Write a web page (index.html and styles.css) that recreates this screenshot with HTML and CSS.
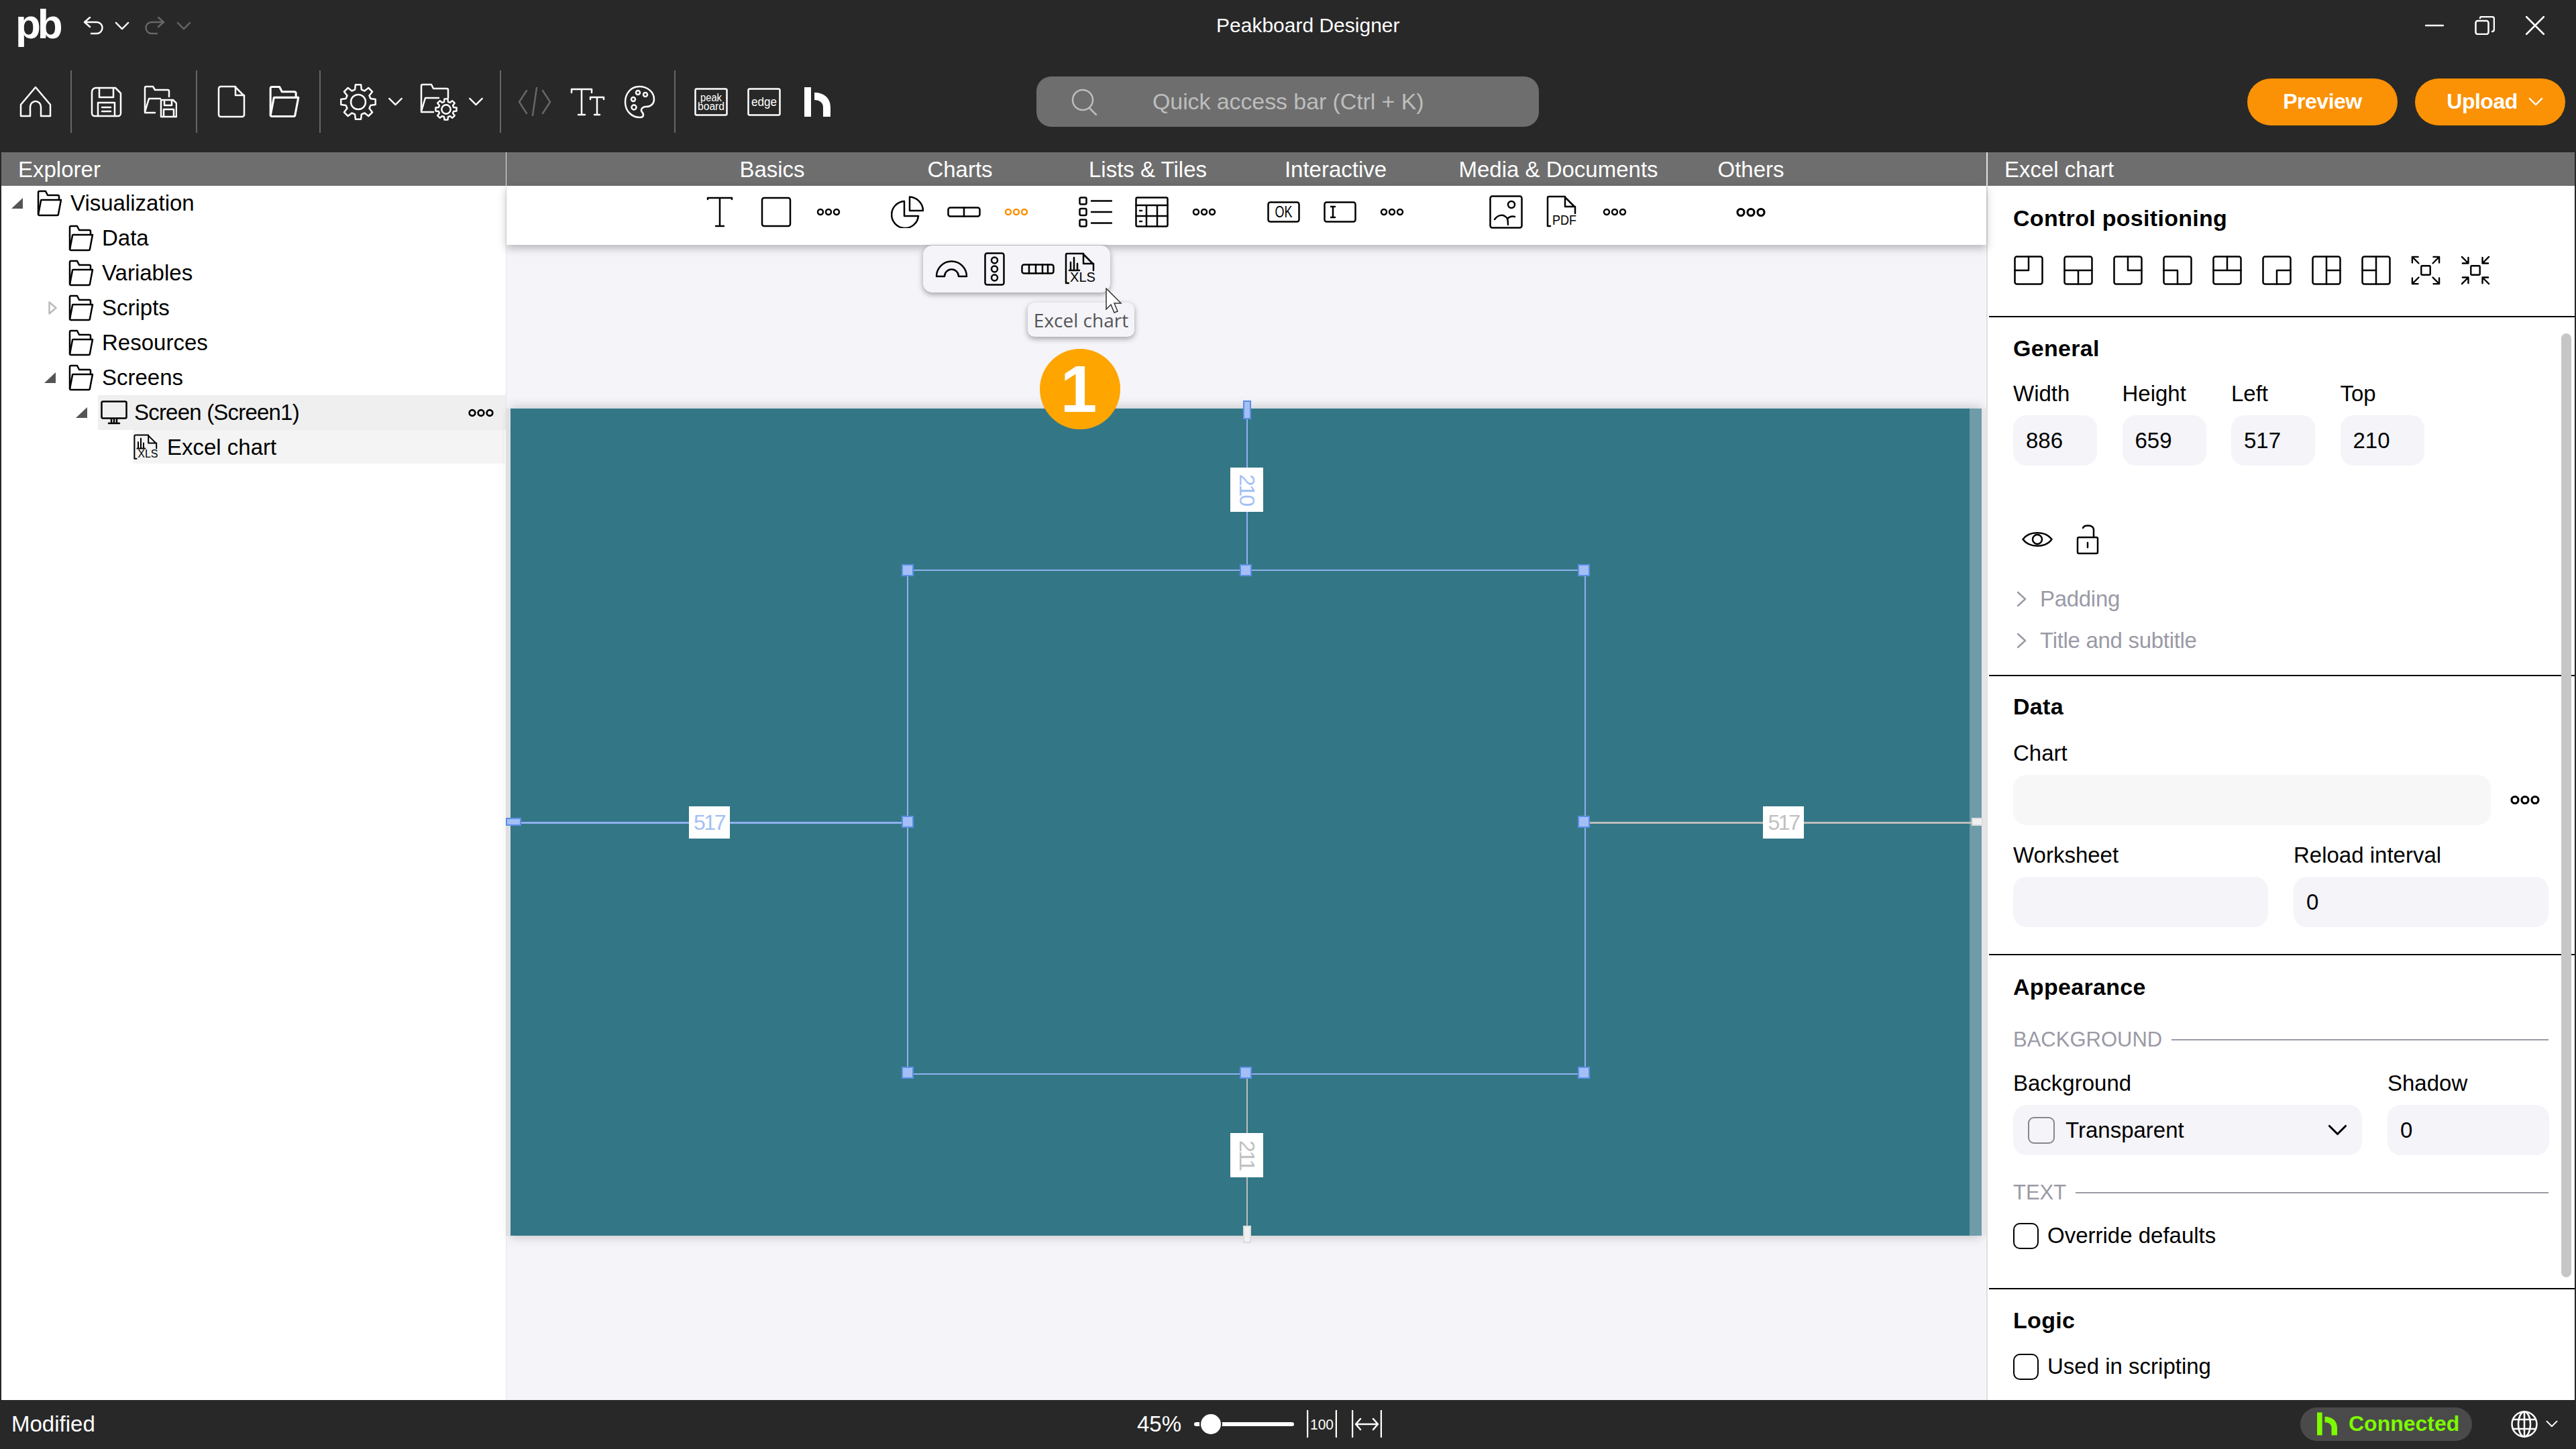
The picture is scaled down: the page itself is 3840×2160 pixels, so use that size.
FILE: index.html
```html
<!DOCTYPE html>
<html lang="en">

<head>
    <meta charset="UTF-8">
    <meta name="viewport" content="width=device-width, initial-scale=1.0">
    <title>Peakboard Designer</title>
    <link rel="stylesheet" href="styles.css">
</head>

<body>
    <!-- Icon sprite -->
    <svg class="defs" aria-hidden="true">
        <symbol id="chevron" viewBox="0 0 24 14"><path d="M2 2 12 12 22 2"/></symbol>
        <symbol id="caret" viewBox="0 0 15 24"><path d="M2 2l11 10L2 22"/></symbol>
        <symbol id="dots" viewBox="0 0 36 12"><circle cx="6" cy="6" r="4"/><circle cx="18" cy="6" r="4"/><circle cx="30" cy="6" r="4"/></symbol>
        <symbol id="undo" viewBox="0 0 30 27"><path d="M10 1 2 8l8 7M2 8h18a8.500 8.500 0 0 1 0 17h-8"/></symbol>
        <symbol id="redo" viewBox="0 0 30 27"><path d="M20 1l8 7-8 7M28 8H10a8.500 8.500 0 0 0 0 17h8"/></symbol>
        <symbol id="home" viewBox="0 0 48 46"><path d="M24 1 2 27v17h14V30a8 8 0 0 1 16 0v14h14V27z"/></symbol>
        <symbol id="save" viewBox="0 0 47 46"><path d="M8 2h29l8 8v30a4 4 0 0 1-4 4H6a4 4 0 0 1-4-4V8a6 6 0 0 1 6-6z"/><path d="M13 2v14h21V2M11 44V24h25v20M17 31h13M17 37h13"/></symbol>
        <symbol id="saveas" viewBox="0 0 51 49"><path d="M3 40V4a2 2 0 0 1 2-2h10l3 5h19a2 2 0 0 1 2 2v8M3 40l6-20h17M3 41h15"/><path d="M27 22h18l5 5v20H27zM32 22v8h11v-8M31 47V36h15v11"/></symbol>
        <symbol id="file" viewBox="0 0 42 49"><path d="M5 2h21l14 14v28a3 3 0 0 1-3 3H5a3 3 0 0 1-3-3V5a3 3 0 0 1 3-3z"/><path d="M27 2v13h13"/></symbol>
        <symbol id="folder" viewBox="0 0 38 40"><path d="M2 36V4a2 2 0 0 1 2-2h9l3 6h15a2 2 0 0 1 2 2v5"/><path d="M2 37 6 16a1 1 0 0 1 1-1h29l-4 21a2 2 0 0 1-2 2H4a2 2 0 0 1-2-1z"/></symbol>
        <symbol id="gear" viewBox="0 0 56 56"><polygon points="32.100,2.300 32.900,9.600 37.500,11.500 43.300,7 49,12.700 44.500,18.500 46.400,23.100 53.700,23.900 53.700,32.100 46.400,32.900 44.500,37.500 49,43.300 43.300,49 37.500,44.500 32.900,46.400 32.100,53.700 23.900,53.700 23.100,46.400 18.500,44.500 12.700,49 7,43.300 11.500,37.500 9.600,32.900 2.300,32.100 2.300,23.900 9.600,23.100 11.500,18.500 7,12.700 12.700,7 18.500,11.500 23.100,9.600 23.900,2.300"/><circle cx="28" cy="28" r="11"/></symbol>
        <symbol id="foldergear" viewBox="0 0 56 56"><path d="M2 42V4a2 2 0 0 1 2-2h13l3 6h20a2 2 0 0 1 2 2v12M2 42l6-20h20M2 43h18"/><use href="#gear" x="22" y="22" width="34" height="34" stroke-width="4"/></symbol>
        <symbol id="code" viewBox="0 0 50 43"><path d="M13 5 2 22l11 17M37 5l11 17-11 17M28 1 22 42"/></symbol>
        <symbol id="fonttype" viewBox="0 0 52 42"><path d="M2 7V2h30v5M17 2v38M12 40h10M30 17v-3h20v3M40 14v26M36 40h8"/></symbol>
        <symbol id="palette" viewBox="0 0 47 50"><path d="M23 2C10 2 2 13 2 25c0 14 10 23 22 23 6 0 6-5 3-8-3-4 1-8 6-8 8 0 12-5 12-11C45 10 35 2 23 2z"/><circle cx="14" cy="21" r="3"/><circle cx="21" cy="11" r="3"/><circle cx="32" cy="14" r="3"/><circle cx="15" cy="33" r="3.500"/></symbol>
        <symbol id="frame" viewBox="0 0 50 42"><rect x="1.500" y="1.500" width="47" height="39" rx="2"/></symbol>
        <symbol id="hlogo" viewBox="0 0 39 44"><path class="ico-fill" d="M0 0h10v44H0zM15 8c14 0 24 8 24 22v14H28V30c0-7-5-11-13-11z"/></symbol>
        <symbol id="search" viewBox="0 0 40 40"><circle cx="17" cy="17" r="15"/><path d="M27 29l10 10"/></symbol>
        <symbol id="minimize" viewBox="0 0 28 4"><path d="M1 2h26"/></symbol>
        <symbol id="restore" viewBox="0 0 30 28"><rect x="1.500" y="7" width="19" height="20" rx="3"/><path d="M8 3a2 2 0 0 1 2-2h16a3 3 0 0 1 3 3v16a3 3 0 0 1-3 3"/></symbol>
        <symbol id="close" viewBox="0 0 28 28"><path d="M1 1l26 26M27 1 1 27"/></symbol>
        <symbol id="fonticon" viewBox="0 0 40 46"><path d="M2 4V2h36v2M20 2v42M14 44h12"/></symbol>
        <symbol id="square" viewBox="0 0 46 46"><rect x="2" y="2" width="42" height="42" rx="3"/></symbol>
        <symbol id="pie" viewBox="0 0 50 48"><path d="M20 8a20 20 0 1 0 21 22H20z"/><path d="M28 1.500A21 21 0 0 1 48 22H28z"/></symbol>
        <symbol id="toggle" viewBox="0 0 50 16"><rect x="1.500" y="1.500" width="47" height="13" rx="3"/><path d="M25 1.500v13"/></symbol>
        <symbol id="list" viewBox="0 0 50 46"><rect x="1.500" y="1.500" width="10" height="10" rx="2"/><rect x="1.500" y="18" width="10" height="10" rx="2"/><rect x="1.500" y="34.500" width="10" height="10" rx="2"/><path d="M19 6.500h30M19 23h30M19 39.500h30"/></symbol>
        <symbol id="table" viewBox="0 0 50 46"><rect x="1.500" y="1.500" width="47" height="43" rx="2"/><path d="M1.500 13h47M1.500 29h47M17 13v31.500M33 13v31.500"/><path d="M7 21h3M7 37h3"/></symbol>
        <symbol id="wide-frame" viewBox="0 0 49 32"><rect x="1.500" y="1.500" width="46" height="29" rx="3"/></symbol>
        <symbol id="textinput" viewBox="0 0 49 32"><rect x="1.500" y="1.500" width="46" height="29" rx="3"/><path d="M11 8h6M14 8v16M11 24h6"/></symbol>
        <symbol id="image" viewBox="0 0 50 50"><rect x="1.500" y="1.500" width="47" height="47" rx="3"/><circle cx="33" cy="14" r="5"/><path d="M8 36c6-8 14-8 19-1 1 3 1 6 1 9M27 35c3-3 7-4 11-3"/></symbol>
        <symbol id="doc" viewBox="0 0 50 50"><path d="M3 28V4a2 2 0 0 1 2-2h23l16 16v9M29 2v15h15M3 28v18h4"/></symbol>
        <symbol id="bars" viewBox="0 0 50 50"><path d="M10 25V15M15 25V8M20 25V17M8 27h15"/></symbol>
        <symbol id="gauge" viewBox="0 0 49 26"><path d="M2 24a22.500 22.500 0 0 1 45 0H35a10.500 10.500 0 0 0-21 0z"/></symbol>
        <symbol id="traffic" viewBox="0 0 31 50"><rect x="1.500" y="1.500" width="28" height="47" rx="3"/><circle cx="15.500" cy="12" r="4.500"/><circle cx="15.500" cy="25" r="4.500"/><circle cx="15.500" cy="38" r="4.500"/></symbol>
        <symbol id="progress" viewBox="0 0 50 16"><rect x="1.500" y="1.500" width="47" height="13" rx="3"/><path d="M12 1.500v13M22 1.500v13M32 1.500v13M40 1.500v13"/></symbol>
        <symbol id="monitor" viewBox="0 0 40 36"><rect x="1.500" y="1.500" width="37" height="25" rx="2"/><path d="M20 27v7M12 34h16M16 27v7M24 27v7"/></symbol>
        <symbol id="eye" viewBox="0 0 46 28"><path d="M1.500 14C11 1 35 1 44.500 14 35 27 11 27 1.500 14z"/><circle cx="23" cy="14" r="7"/></symbol>
        <symbol id="lock" viewBox="0 0 34 46"><rect x="2" y="20" width="30" height="24" rx="2"/><path d="M10 6c2-5 15-5 16 2v12M17 28v7"/></symbol>
        <symbol id="pos-tl" viewBox="0 0 44 44"><rect x="1.500" y="1.500" width="41" height="41" rx="3"/><path d="M1.500 22H22V1.500"/></symbol>
        <symbol id="pos-b" viewBox="0 0 44 44"><rect x="1.500" y="1.500" width="41" height="41" rx="3"/><path d="M1.500 22h41M22 22v20.500"/></symbol>
        <symbol id="pos-tr" viewBox="0 0 44 44"><rect x="1.500" y="1.500" width="41" height="41" rx="3"/><path d="M22 1.500V22h20.500"/></symbol>
        <symbol id="pos-bl" viewBox="0 0 44 44"><rect x="1.500" y="1.500" width="41" height="41" rx="3"/><path d="M1.500 22H22v20.500"/></symbol>
        <symbol id="pos-t" viewBox="0 0 44 44"><rect x="1.500" y="1.500" width="41" height="41" rx="3"/><path d="M1.500 22h41M22 1.500V22"/></symbol>
        <symbol id="pos-br" viewBox="0 0 44 44"><rect x="1.500" y="1.500" width="41" height="41" rx="3"/><path d="M22 42.500V22h20.500"/></symbol>
        <symbol id="pos-r" viewBox="0 0 44 44"><rect x="1.500" y="1.500" width="41" height="41" rx="3"/><path d="M22 1.500v41M22 22h20.500"/></symbol>
        <symbol id="pos-l" viewBox="0 0 44 44"><rect x="1.500" y="1.500" width="41" height="41" rx="3"/><path d="M22 1.500v41M1.500 22H22"/></symbol>
        <symbol id="expand" viewBox="0 0 46 46"><rect x="16" y="16" width="14" height="14" rx="1.500"/><path d="M2 11V2h9M2 2l10 10M35 2h9v9M44 2 34 12M2 35v9h9M2 44l10-10M44 35v9h-9M44 44 34 34"/></symbol>
        <symbol id="compress" viewBox="0 0 46 46"><rect x="16" y="16" width="14" height="14" rx="1.500"/><path d="M12 3v9H3M12 12 2 2M34 3v9h9M34 12 44 2M3 34h9v9M12 34 2 44M43 34h-9v9M34 34l10 10"/></symbol>
        <symbol id="bars-fit" viewBox="0 0 45 41"><path d="M1 1v39M44 1v39"/></symbol>
        <symbol id="fitwidth" viewBox="0 0 45 41"><path d="M1 1v39M44 1v39M6 21h33M13 13l-7 8 7 8M32 13l7 8-7 8"/></symbol>
        <symbol id="globe" viewBox="0 0 40 40"><circle cx="20" cy="20" r="18.500"/><ellipse cx="20" cy="20" rx="9" ry="18.500"/><path d="M3 13h34M3 27h34M20 1.500v37"/></symbol>
        <symbol id="cursor" viewBox="0 0 25 38"><path class="cursor-shape" d="M1 1v31l7-7 5 12 5-2-5-12h10z"/></symbol>
        <symbol id="tree-closed" viewBox="0 0 13 20"><path d="M1.500 1.500 11.500 10l-10 8.500z"/></symbol>
    </svg>

    <!-- Title bar -->
    <header class="titlebar">
        <div class="title-row">
            <div class="title-left">
                <span class="logo">pb</span>
                <svg class="ico undo" width="30" height="27"><use href="#undo"/></svg>
                <svg class="ico chev" width="22" height="13"><use href="#chevron"/></svg>
                <svg class="ico dim redo" width="30" height="27"><use href="#redo"/></svg>
                <svg class="ico dim chev" width="22" height="13"><use href="#chevron"/></svg>
            </div>
            <span class="app-title">Peakboard Designer</span>
            <div class="window-buttons">
                <svg class="ico" width="28" height="4"><use href="#minimize"/></svg>
                <svg class="ico" width="30" height="28"><use href="#restore"/></svg>
                <svg class="ico" width="28" height="28"><use href="#close"/></svg>
            </div>
        </div>
        <div class="tools">
            <svg class="ico" width="48" height="46"><use href="#home"/></svg>
            <span class="sep"></span>
            <div class="tool-group gap-31">
                <svg class="ico" width="47" height="46"><use href="#save"/></svg>
                <svg class="ico" width="51" height="49"><use href="#saveas"/></svg>
            </div>
            <span class="sep"></span>
            <div class="tool-group gap-33 file-tools">
                <svg class="ico" width="42" height="49"><use href="#file"/></svg>
                <svg class="ico" width="50" height="49"><use href="#folder"/></svg>
            </div>
            <span class="sep"></span>
            <div class="tool-group settings">
                <div class="tool-group gap-16">
                    <svg class="ico" width="56" height="56"><use href="#gear"/></svg>
                    <svg class="ico" width="23" height="13"><use href="#chevron"/></svg>
                </div>
                <div class="tool-group gap-16">
                    <svg class="ico" width="56" height="56"><use href="#foldergear"/></svg>
                    <svg class="ico" width="23" height="13"><use href="#chevron"/></svg>
                </div>
            </div>
            <span class="sep"></span>
            <div class="tool-group gap-28 style-tools">
                <svg class="ico dim" width="50" height="43"><use href="#code"/></svg>
                <svg class="ico" width="52" height="42"><use href="#fonttype"/></svg>
                <svg class="ico" width="47" height="50"><use href="#palette"/></svg>
            </div>
            <span class="sep"></span>
            <div class="tool-group gap-29">
                <svg class="ico" width="50" height="42" viewBox="0 0 50 42">
                    <use href="#frame"/>
                    <text class="ico-text" x="25" y="20" text-anchor="middle" font-size="16" textLength="32" lengthAdjust="spacingAndGlyphs">peak</text>
                    <text class="ico-text" x="25" y="33" text-anchor="middle" font-size="16" textLength="40" lengthAdjust="spacingAndGlyphs">board</text>
                </svg>
                <svg class="ico" width="50" height="42" viewBox="0 0 50 42">
                    <use href="#frame"/>
                    <text class="ico-text" x="25" y="27" text-anchor="middle" font-size="19" textLength="38" lengthAdjust="spacingAndGlyphs">edge</text>
                </svg>
                <svg class="ico hub" width="39" height="44"><use href="#hlogo"/></svg>
            </div>
            <div class="quick-access">
                <svg class="ico" width="40" height="40"><use href="#search"/></svg>
                <span>Quick access bar (Ctrl + K)</span>
            </div>
            <div class="actions">
                <button class="btn">Preview</button>
                <button class="btn btn-upload">Upload <svg class="ico" width="22" height="13"><use href="#chevron"/></svg></button>
            </div>
        </div>
    </header>

    <main class="main">
        <!-- Explorer -->
        <aside class="explorer">
            <div class="panel-head">Explorer</div>
            <div class="tree">
                <div class="tree-row">
                    <span class="arrow-slot level-0"><span class="arrow-open"></span></span>
                    <div class="node"><svg class="ico" width="38" height="40"><use href="#folder"/></svg>Visualization</div>
                </div>
                <div class="tree-row">
                    <span class="arrow-slot level-1"></span>
                    <div class="node"><svg class="ico" width="38" height="40"><use href="#folder"/></svg>Data</div>
                </div>
                <div class="tree-row">
                    <span class="arrow-slot level-1"></span>
                    <div class="node"><svg class="ico" width="38" height="40"><use href="#folder"/></svg>Variables</div>
                </div>
                <div class="tree-row">
                    <span class="arrow-slot level-1"><svg class="ico arrow-closed" width="13" height="20"><use href="#tree-closed"/></svg></span>
                    <div class="node"><svg class="ico" width="38" height="40"><use href="#folder"/></svg>Scripts</div>
                </div>
                <div class="tree-row">
                    <span class="arrow-slot level-1"></span>
                    <div class="node"><svg class="ico" width="38" height="40"><use href="#folder"/></svg>Resources</div>
                </div>
                <div class="tree-row">
                    <span class="arrow-slot level-1"><span class="arrow-open"></span></span>
                    <div class="node"><svg class="ico" width="38" height="40"><use href="#folder"/></svg>Screens</div>
                </div>
                <div class="tree-row">
                    <span class="arrow-slot level-2"><span class="arrow-open"></span></span>
                    <div class="node node-screen"><svg class="ico" width="40" height="36"><use href="#monitor"/></svg><span class="screen-name">Screen (Screen1)</span>
                        <svg class="ico node-more" width="40" height="13"><use href="#dots"/></svg>
                    </div>
                </div>
                <div class="tree-row">
                    <span class="arrow-slot level-3"></span>
                    <div class="node node-chart">
                        <svg class="ico" width="40" height="40" viewBox="0 0 50 50">
                            <use href="#doc"/><use href="#bars"/>
                            <text class="ico-text" x="28" y="44" text-anchor="middle" font-size="20" textLength="38" lengthAdjust="spacingAndGlyphs">XLS</text>
                        </svg>Excel chart
                    </div>
                </div>
            </div>
        </aside>

        <!-- Designer -->
        <section class="designer">
            <div class="panel-head tabs">
                <div class="group">Basics</div>
                <div class="group">Charts</div>
                <div class="group">Lists &amp; Tiles</div>
                <div class="group">Interactive</div>
                <div class="group media">Media &amp; Documents</div>
                <div class="group others">Others</div>
            </div>
            <div class="toolbox tabs">
                <div class="group">
                    <span class="cell"><svg class="ico" width="40" height="46"><use href="#fonticon"/></svg></span>
                    <span class="cell"><svg class="ico" width="46" height="46"><use href="#square"/></svg></span>
                    <span class="cell more"><svg class="ico" width="36" height="12"><use href="#dots"/></svg></span>
                </div>
                <div class="group">
                    <span class="cell"><svg class="ico" width="50" height="48"><use href="#pie"/></svg></span>
                    <span class="cell"><svg class="ico" width="50" height="16"><use href="#toggle"/></svg></span>
                    <span class="cell more"><svg class="ico active" width="36" height="12"><use href="#dots"/></svg></span>
                </div>
                <div class="group">
                    <span class="cell"><svg class="ico" width="50" height="46"><use href="#list"/></svg></span>
                    <span class="cell"><svg class="ico" width="50" height="46"><use href="#table"/></svg></span>
                    <span class="cell more"><svg class="ico" width="36" height="12"><use href="#dots"/></svg></span>
                </div>
                <div class="group">
                    <span class="cell">
                        <svg class="ico" width="49" height="32" viewBox="0 0 49 32">
                            <use href="#wide-frame"/>
                            <text class="ico-text" x="24.500" y="24" text-anchor="middle" font-size="23" textLength="26" lengthAdjust="spacingAndGlyphs">OK</text>
                        </svg>
                    </span>
                    <span class="cell"><svg class="ico" width="49" height="32"><use href="#textinput"/></svg></span>
                    <span class="cell more"><svg class="ico" width="36" height="12"><use href="#dots"/></svg></span>
                </div>
                <div class="group media">
                    <span class="cell"><svg class="ico" width="50" height="50"><use href="#image"/></svg></span>
                    <span class="cell">
                        <svg class="ico" width="50" height="50" viewBox="0 0 50 50">
                            <use href="#doc"/>
                            <text class="ico-text" x="28" y="44" text-anchor="middle" font-size="20" textLength="36" lengthAdjust="spacingAndGlyphs">PDF</text>
                        </svg>
                    </span>
                    <span class="cell more"><svg class="ico" width="36" height="12"><use href="#dots"/></svg></span>
                </div>
                <div class="group others">
                    <span class="cell more"><svg class="ico" width="46" height="15"><use href="#dots"/></svg></span>
                </div>
            </div>

            <div class="stage">
                <div class="board">
                    <div class="board-edge"></div>

                    <div class="measure horizontal from-left">
                        <span class="end end-left"></span>
                        <span class="measure-label">517</span>
                    </div>
                    <div class="measure horizontal from-right off">
                        <span class="end end-right"></span>
                        <span class="measure-label">517</span>
                    </div>
                    <div class="measure vertical from-top">
                        <span class="end end-top"></span>
                        <span class="measure-label">210</span>
                    </div>
                    <div class="measure vertical from-bottom off">
                        <span class="end end-bottom"></span>
                        <span class="measure-label">211</span>
                    </div>

                    <div class="selection">
                        <span class="handle h-tl"></span>
                        <span class="handle h-tc"></span>
                        <span class="handle h-tr"></span>
                        <span class="handle h-ml"></span>
                        <span class="handle h-mr"></span>
                        <span class="handle h-bl"></span>
                        <span class="handle h-bc"></span>
                        <span class="handle h-br"></span>
                    </div>
                </div>

                <div class="flyout">
                    <svg class="ico" width="49" height="26"><use href="#gauge"/></svg>
                    <svg class="ico" width="31" height="50"><use href="#traffic"/></svg>
                    <svg class="ico" width="50" height="16"><use href="#progress"/></svg>
                    <svg class="ico flyout-xls" width="50" height="50" viewBox="0 0 50 50">
                        <use href="#doc"/><use href="#bars"/>
                        <text class="ico-text" x="28" y="44" text-anchor="middle" font-size="20" textLength="38" lengthAdjust="spacingAndGlyphs">XLS</text>
                    </svg>
                </div>
                <div class="tooltip">Excel chart</div>
                <div class="badge">1</div>
                <svg class="pointer" width="25" height="38"><use href="#cursor"/></svg>
            </div>
        </section>

        <!-- Properties -->
        <aside class="props">
            <div class="panel-head props-head">Excel chart</div>
            <div class="scroll-thumb"></div>

            <section class="prop-section s-position">
                <h2>Control positioning</h2>
                <div class="pos-icons">
                    <svg class="ico" width="44" height="44"><use href="#pos-tl"/></svg>
                    <svg class="ico" width="44" height="44"><use href="#pos-b"/></svg>
                    <svg class="ico" width="44" height="44"><use href="#pos-tr"/></svg>
                    <svg class="ico" width="44" height="44"><use href="#pos-bl"/></svg>
                    <svg class="ico" width="44" height="44"><use href="#pos-t"/></svg>
                    <svg class="ico" width="44" height="44"><use href="#pos-br"/></svg>
                    <svg class="ico" width="44" height="44"><use href="#pos-r"/></svg>
                    <svg class="ico" width="44" height="44"><use href="#pos-l"/></svg>
                    <svg class="ico" width="44" height="44"><use href="#expand"/></svg>
                    <svg class="ico" width="44" height="44"><use href="#compress"/></svg>
                </div>
            </section>

            <section class="prop-section s-general">
                <h2>General</h2>
                <div class="size-grid">
                    <label>Width<span class="field">886</span></label>
                    <label>Height<span class="field">659</span></label>
                    <label>Left<span class="field">517</span></label>
                    <label>Top<span class="field">210</span></label>
                </div>
                <div class="state-icons">
                    <svg class="ico" width="46" height="28"><use href="#eye"/></svg>
                    <svg class="ico" width="34" height="46"><use href="#lock"/></svg>
                </div>
                <div class="expander expander-first"><svg class="ico" width="15" height="24"><use href="#caret"/></svg>Padding</div>
                <div class="expander"><svg class="ico" width="15" height="24"><use href="#caret"/></svg>Title and subtitle</div>
            </section>

            <section class="prop-section s-data">
                <h2>Data</h2>
                <label class="chart-label">Chart</label>
                <div class="chart-row">
                    <span class="field field-muted"></span>
                    <svg class="ico" width="46" height="15"><use href="#dots"/></svg>
                </div>
                <div class="two-col">
                    <label>Worksheet<span class="field"></span></label>
                    <label>Reload interval<span class="field">0</span></label>
                </div>
            </section>

            <section class="prop-section s-appearance">
                <h2>Appearance</h2>
                <div class="rule-title rule-background"><span>BACKGROUND</span></div>
                <div class="bg-row">
                    <label>Background
                        <span class="field select">
                            <span class="swatch"></span>Transparent
                            <svg class="ico select-chev" width="29" height="17"><use href="#chevron"/></svg>
                        </span>
                    </label>
                    <label>Shadow<span class="field">0</span></label>
                </div>
                <div class="rule-title rule-text"><span>TEXT</span></div>
                <div class="check"><span class="box"></span>Override defaults</div>
            </section>

            <section class="prop-section s-logic">
                <h2>Logic</h2>
                <div class="check"><span class="box"></span>Used in scripting</div>
            </section>
        </aside>
    </main>

    <!-- Status bar -->
    <footer class="statusbar">
        <span class="status-text">Modified</span>
        <div class="zoom">
            <span>45%</span>
            <div class="slider"><span class="slider-thumb"></span></div>
            <svg class="ico" width="45" height="41" viewBox="0 0 45 41">
                <use href="#bars-fit"/>
                <text class="ico-text" x="22.500" y="29" text-anchor="middle" font-size="22" textLength="35" lengthAdjust="spacingAndGlyphs">100</text>
            </svg>
            <svg class="ico fit-width" width="45" height="41"><use href="#fitwidth"/></svg>
        </div>
        <div class="status-right">
            <div class="connected">
                <svg class="ico" width="30" height="35"><use href="#hlogo"/></svg>
                <span>Connected</span>
            </div>
            <svg class="ico" width="40" height="40"><use href="#globe"/></svg>
            <svg class="ico" width="18" height="11"><use href="#chevron"/></svg>
        </div>
    </footer>
</body>

</html>
```

FILE: styles.css
```css
* {
    margin: 0;
    padding: 0;
    box-sizing: border-box;
}

body {
    width: 3840px;
    height: 2160px;
    overflow: hidden;
    display: flex;
    flex-direction: column;
    background-color: #282828;
    color: #000;
    font-family: "Liberation Sans", Arial, sans-serif;
    font-size: 33px;
}

.defs {
    position: absolute;
    width: 0;
    height: 0;
}

.ico {
    flex: none;
    fill: none;
    stroke: currentColor;
    stroke-width: 2.5;
    stroke-linecap: round;
    stroke-linejoin: round;
}

.ico-text {
    fill: currentColor;
    stroke: none;
    font-family: "Liberation Sans", Arial, sans-serif;
}

.ico-fill {
    fill: currentColor;
    stroke: none;
}

.dim {
    color: #666;
}

/* Title bar */
.titlebar {
    height: 227px;
    color: #fff;
}

.title-row {
    display: flex;
    align-items: center;
    height: 76px;
}

.title-left {
    display: flex;
    align-items: center;
    width: 1813px;
    padding-left: 23px;
}

.logo {
    width: 101px;
    font-size: 62px;
    font-weight: bold;
    letter-spacing: -5px;
    line-height: 1;
    margin-top: -4px;
}

.chev {
    margin-left: 17px;
}

.redo {
    margin-left: 23px;
}

.app-title {
    font-size: 30px;
}

.window-buttons {
    display: flex;
    align-items: center;
    gap: 46px;
    margin-left: auto;
    padding-right: 47px;
}

.tools {
    display: flex;
    align-items: center;
    gap: 28px;
    height: 151px;
    padding-left: 29px;
}

.tool-group {
    display: flex;
    align-items: center;
}

.gap-16 {
    gap: 16px;
}

.gap-28 {
    gap: 28px;
}

.gap-29 {
    gap: 29px;
}

.gap-31 {
    gap: 31px;
}

.gap-33 {
    gap: 33px;
}

.file-tools {
    margin-left: 2px;
    margin-right: -1px;
}

.settings {
    gap: 25px;
    margin-right: -4px;
}

.style-tools {
    margin-left: -3px;
}

.hub {
    margin-left: 6px;
}

.sep {
    width: 2px;
    height: 93px;
    background-color: #666;
}

.quick-access {
    display: flex;
    align-items: center;
    gap: 81px;
    width: 749px;
    height: 75px;
    margin-left: 279px;
    padding-left: 52px;
    border-radius: 22px;
    background-color: #6e6e6e;
    color: #bdbdbd;
    font-size: 34px;
    letter-spacing: -0.1px;
}

.actions {
    display: flex;
    gap: 26px;
    margin-left: auto;
    padding-right: 16px;
}

.btn {
    display: flex;
    align-items: center;
    justify-content: center;
    gap: 16px;
    width: 224px;
    height: 70px;
    border: none;
    border-radius: 35px;
    background-color: #fb9104;
    color: #fff;
    font-family: inherit;
    font-size: 32px;
    font-weight: bold;
    letter-spacing: -0.5px;
}

.btn-upload {
    padding-left: 14px;
}

/* Panels */
.main {
    flex: 1;
    display: flex;
    min-height: 0;
    padding: 0 2px;
}

.panel-head {
    display: flex;
    align-items: center;
    height: 50px;
    padding-top: 2px;
    background-color: #6e6e6e;
    color: #fff;
}

.explorer {
    width: 752px;
    background-color: #fff;
}

.explorer .panel-head {
    padding-left: 25px;
}

.tree-row {
    display: flex;
    align-items: center;
    height: 52px;
}

.arrow-slot {
    flex: none;
    display: flex;
    align-items: center;
}

.level-0 {
    width: 53px;
    padding-left: 15px;
}

.level-1 {
    width: 100px;
    padding-left: 64px;
}

.level-2 {
    width: 144px;
    padding-left: 111px;
}

.level-3 {
    width: 196px;
}

.arrow-open {
    width: 17px;
    height: 16px;
    background-color: #555;
    clip-path: polygon(100% 0, 100% 100%, 0 100%);
}

.arrow-closed {
    margin-left: 6px;
    color: #bbb;
}

.node {
    flex: 1;
    display: flex;
    align-items: center;
    gap: 12px;
    height: 100%;
}

.node-screen {
    gap: 10px;
    padding-left: 4px;
    background-color: #efefef;
}

.screen-name {
    letter-spacing: -0.8px;
}

.node-more {
    margin-left: auto;
    margin-right: 17px;
}

.node-chart {
    gap: 11px;
    height: 50px;
    padding-top: 1px;
    align-self: flex-start;
    margin-right: 2px;
    background-color: #f4f4f4;
}

.designer {
    flex: 1;
    display: flex;
    flex-direction: column;
    min-width: 0;
    border-left: 1px solid #e6e6e6;
}

.tabs {
    display: flex;
    gap: 40px;
    padding-left: 276px;
}

.group {
    display: flex;
    justify-content: center;
    flex: none;
    width: 240px;
    white-space: nowrap;
}

.group.media {
    margin-left: 52px;
}

.group.others {
    width: 72px;
    margin-left: 91px;
}

.toolbox {
    position: relative;
    z-index: 1;
    height: 88px;
    padding-top: 15px;
    background-color: #fff;
    box-shadow: 0 5px 12px rgba(0, 0, 0, 0.25);
}

.cell {
    display: flex;
    align-items: center;
    justify-content: center;
    width: 84px;
    height: 48px;
}

.cell.more {
    width: 72px;
}

.active {
    color: #fb9104;
}

/* Canvas */
.stage {
    position: relative;
    flex: 1;
    min-height: 0;
    padding: 244px 7px 245px 6px;
    background-color: #f4f4f9;
}

.board {
    position: relative;
    height: 100%;
    background-color: #337786;
    box-shadow: -7px 0 0 #e0e0e4, 7px 0 0 #e6e6ea, 0 -5px 14px rgba(0, 0, 0, 0.12), 0 5px 14px rgba(0, 0, 0, 0.12);
}

.board-edge {
    position: absolute;
    top: 0;
    right: 0;
    bottom: 0;
    width: 18px;
    background-color: #6f9ca9;
}

.selection {
    position: absolute;
    left: 591px;
    top: 240px;
    width: 1012px;
    height: 753px;
    border: 2px solid #8fb0ee;
}

.handle {
    position: absolute;
    width: 18px;
    height: 18px;
    margin: -10px 0 0 -10px;
    border: 2px solid #5b8fe6;
    background-color: #a3bff5;
}

.h-tl, .h-ml, .h-bl {
    left: 0;
}

.h-tc, .h-bc {
    left: 50%;
}

.h-tr, .h-mr, .h-br {
    left: 100%;
}

.h-tl, .h-tc, .h-tr {
    top: 0;
}

.h-ml, .h-mr {
    top: 50%;
}

.h-bl, .h-bc, .h-br {
    top: 100%;
}

.measure {
    position: absolute;
    display: flex;
    align-items: center;
    justify-content: center;
    --line: #8fb0ee;
    --mark: #a3bff5;
    --mark-edge: #5b8fe6;
}

.measure.off {
    --line: #bdbdbd;
    --mark: #c0c0c0;
    --mark-edge: #dcdcdc;
}

.measure::before {
    content: "";
    position: absolute;
    background-color: var(--line);
}

.horizontal {
    height: 48px;
    top: 593px;
}

.horizontal::before {
    left: 0;
    right: 0;
    top: 23px;
    height: 3px;
}

.vertical {
    width: 49px;
    left: 1073px;
}

.vertical::before {
    top: 0;
    bottom: 0;
    left: 24px;
    width: 2px;
}

.from-left {
    left: 0;
    width: 592px;
}

.from-right {
    left: 1602px;
    right: 0;
}

.from-top {
    top: 0;
    height: 241px;
}

.from-bottom {
    top: 992px;
    bottom: 0;
}

.measure-label {
    position: relative;
    display: flex;
    align-items: center;
    justify-content: center;
    width: 61px;
    height: 48px;
    background-color: #fff;
    color: var(--mark);
    font-size: 32px;
    letter-spacing: -2.5px;
}

.vertical .measure-label {
    width: 49px;
    height: 66px;
    writing-mode: vertical-rl;
}

.end {
    position: absolute;
    border: 2px solid var(--mark-edge);
    background-color: #a3bff5;
}

.off .end {
    background-color: #f0f0f0;
}

.end-left {
    left: -7px;
    top: 17px;
    width: 23px;
    height: 12px;
}

.end-right {
    right: -2px;
    top: 17px;
    width: 17px;
    height: 12px;
}

.end-top {
    left: 19px;
    top: -12px;
    width: 12px;
    height: 28px;
}

.end-bottom {
    left: 19px;
    bottom: -11px;
    width: 12px;
    height: 26px;
}

.flyout {
    position: absolute;
    z-index: 2;
    left: 621px;
    top: 1px;
    display: flex;
    align-items: center;
    gap: 24px;
    width: 279px;
    height: 70px;
    padding-left: 18px;
    border-radius: 14px;
    background-color: #f4f4f9;
    box-shadow: 0 3px 8px rgba(0, 0, 0, 0.35);
}

.flyout-xls {
    margin-left: -10px;
}

.tooltip {
    position: absolute;
    z-index: 2;
    left: 777px;
    top: 86px;
    width: 159px;
    height: 51px;
    border-radius: 10px;
    background-color: #f4f4f9;
    box-shadow: 0 3px 8px rgba(0, 0, 0, 0.35);
    color: #555;
    font-family: "Open Sans", sans-serif;
    font-size: 28px;
    line-height: 53px;
    text-align: center;
}

.badge {
    position: absolute;
    z-index: 2;
    left: 795px;
    top: 155px;
    width: 120px;
    height: 120px;
    padding-right: 4px;
    border-radius: 50%;
    background-color: #fea500;
    color: #fff;
    font-size: 98px;
    font-weight: bold;
    line-height: 120px;
    text-align: center;
}

.pointer {
    position: absolute;
    z-index: 3;
    left: 893px;
    top: 64px;
}

.cursor-shape {
    fill: #fff;
    stroke: #333;
    stroke-width: 1.5;
}

/* Properties */
.props {
    position: relative;
    width: 877px;
    border-left: 2px solid #e0e0e0;
    background-color: #fff;
}

.props-head {
    padding-left: 25px;
}

.scroll-thumb {
    position: absolute;
    z-index: 1;
    left: 855px;
    top: 270px;
    width: 15px;
    height: 1407px;
    border-radius: 8px;
    background-color: #c6c6c6;
}

.prop-section {
    margin-left: 2px;
    padding: 0 39px 0 36px;
    border-bottom: 2px solid #000;
}

.prop-section h2 {
    height: 40px;
    font-size: 34px;
    line-height: 40px;
    letter-spacing: 0.3px;
}

.prop-section label {
    display: block;
    line-height: 40px;
}

.s-position {
    height: 196px;
    padding-top: 28px;
}

.pos-icons {
    display: flex;
    gap: 30px;
    margin-top: 36px;
    margin-left: 1px;
}

.s-general {
    height: 535px;
    padding-top: 26px;
}

.size-grid {
    display: grid;
    grid-template-columns: repeat(4, 125px);
    gap: 37.5px;
    margin-top: 28px;
}

.field {
    display: flex;
    align-items: center;
    height: 75px;
    margin-top: 12px;
    padding-left: 19px;
    border-radius: 20px;
    background-color: #f4f4f9;
    line-height: 1;
}

.field-muted {
    flex: none;
    width: 712px;
    margin-top: 0;
    background-color: #f7f7f7;
}

.state-icons {
    display: flex;
    align-items: center;
    gap: 35px;
    height: 46px;
    margin-top: 87px;
    padding-left: 13px;
}

.expander {
    display: flex;
    align-items: center;
    gap: 20px;
    height: 62px;
    padding-left: 5px;
    color: #9a9aa6;
    letter-spacing: -0.3px;
}

.expander-first {
    margin-top: 35px;
}

.s-data {
    height: 416px;
    padding-top: 25px;
}

.chart-label {
    margin-top: 30px;
}

.chart-row {
    display: flex;
    align-items: center;
    gap: 28px;
    margin-top: 12px;
}

.two-col {
    display: grid;
    grid-template-columns: 380px 380px;
    gap: 38px;
    margin-top: 25px;
}

.s-appearance {
    height: 498px;
    padding-top: 27px;
}

.rule-title {
    display: flex;
    align-items: center;
    gap: 14px;
    height: 40px;
    color: #9a9aa6;
    font-size: 31px;
}

.rule-title::after {
    content: "";
    flex: 1;
    height: 2px;
    background-color: #9a9aa6;
}

.rule-background {
    margin-top: 39px;
}

.rule-text {
    margin-top: 36px;
}

.bg-row {
    display: grid;
    grid-template-columns: 520px 241px;
    gap: 38px;
    margin-top: 25px;
}

.select {
    gap: 16px;
    padding-left: 22px;
}

.swatch {
    width: 40px;
    height: 40px;
    border: 2px solid #888;
    border-radius: 9px;
}

.select-chev {
    margin-left: auto;
    margin-right: 22px;
}

.check {
    display: flex;
    align-items: center;
    gap: 13px;
    height: 40px;
    margin-top: 23px;
    padding-top: 2px;
}

.box {
    width: 38px;
    height: 39px;
    border: 2px solid #000;
    border-radius: 10px;
}

.s-logic {
    border-bottom: none;
    padding-top: 26px;
}

.s-logic .check {
    margin-top: 28px;
}

/* Status bar */
.statusbar {
    display: flex;
    align-items: center;
    height: 73px;
    padding: 0 27px 2px 17px;
    color: #fff;
}

.status-text {
    flex: none;
    width: 1678px;
}

.zoom {
    display: flex;
    align-items: center;
    gap: 19px;
}

.fit-width {
    margin-left: 3px;
}

.slider {
    position: relative;
    width: 149px;
    height: 6px;
    border-radius: 3px;
    background-color: #fff;
}

.slider-thumb {
    position: absolute;
    left: 10px;
    top: -12px;
    width: 30px;
    height: 30px;
    border-radius: 50%;
    background-color: #fff;
    box-shadow: 0 0 0 2px #282828;
}

.status-right {
    display: flex;
    align-items: center;
    margin-left: auto;
    gap: 12px;
}

.connected {
    display: flex;
    align-items: center;
    gap: 17px;
    width: 256px;
    height: 50px;
    margin-right: 46px;
    padding-left: 25px;
    border-radius: 25px;
    background-color: #4a4a4a;
    color: #7dfb00;
    font-size: 32px;
    font-weight: bold;
}
```
